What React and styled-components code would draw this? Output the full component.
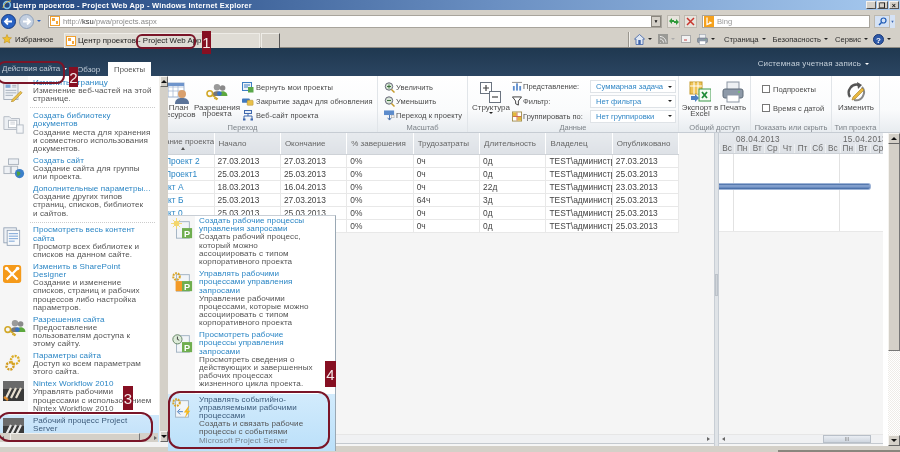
import React from "react";
import styled, { createGlobalStyle } from "styled-components";

const Global = createGlobalStyle`
  html, body { margin: 0; padding: 0; background: #f5f5f5; }
  * { box-sizing: border-box; }
  #root { width: 900px; height: 452px; overflow: hidden; }
`;

const Page = styled.div`
  position: relative; width: 900px; height: 452px; overflow: hidden;
  display: flex; flex-direction: column;
  font-family: "Liberation Sans", Tahoma, sans-serif; font-size: 8.1px; color: #444;
  filter: blur(0.3px);
`;

/* ---------- browser chrome ---------- */
const TitleBar = styled.div`
  height: 10px; flex: none; display: flex; align-items: center; padding: 0 1px 0 2px;
  background: linear-gradient(90deg, #23467f 0%, #3d6299 25%, #6a8fc2 55%, #a6c9ef 100%);
`;
const TitleText = styled.span`
  color: #fff; font-weight: bold; font-size: 7.5px; margin-left: 1px; letter-spacing: .2px; flex: 1; white-space: nowrap;
`;
const WinBtn = styled.span`
  width: 10.5px; height: 8px; margin-left: 1px; background: #d4d0c8; border: 1px solid #f4f2ee;
  border-right-color: #555; border-bottom-color: #555; display: flex; align-items: center; justify-content: center;
  color: #111; font-size: 7px; line-height: 1; font-weight: bold;
`;
const AddressBar = styled.div`
  height: 21px; flex: none; background: #d4d0c8; display: flex; align-items: center; padding: 1px 5px 0 1px;
`;
const NavBtn = styled.div`display: flex; width: 15px; height: 15px; margin-right: 3px;`;
const AddrField = styled.div`
  width: 614px; height: 13px; margin-left: 7px; background: #fff; border: 1px solid #a8a49c;
  display: flex; align-items: center; padding-left: 1px; font-size: 7.6px; color: #8a8a8a;
`;
const AddrText = styled.span`flex: 1; margin-left: 3px; b { color: #333; font-weight: normal; }`;
const DropBtn = styled.span`
  width: 10px; height: 11px; background: #d4d0c8; border: 1px solid #8a867e; display: flex;
  align-items: center; justify-content: center; font-size: 5px; color: #111;
`;
const SmallBtn = styled.div`
  width: 13px; height: 13px; margin-left: ${p => p.$ml || 4}px; background: #e7e4dd; border: 1px solid #bdb9b0;
  display: flex; align-items: center; justify-content: center;
`;
const SearchField = styled.div`
  width: 168px; height: 13px; margin-left: 5px; background: #fff; border: 1px solid #a8a49c;
  display: flex; align-items: center; color: #999; font-size: 7.6px; gap: 3px; padding-left: 1px;
`;
const SearchBtn = styled.div`
  width: 16px; height: 13px; margin-left: 4px; background: #d5e2f5; border: 1px solid #bdb9b0;
  display: flex; align-items: center; justify-content: center;
`;
const SearchDrop = styled.div`
  width: 5px; height: 13px; background: #d5e2f5; display: flex; align-items: center; justify-content: center;
  font-size: 4px; color: #3a66b0;
`;
const FavBar = styled.div`
  height: 17px; flex: none; background: #d4d0c8; display: flex; align-items: center; padding: 0 9px 0 2px;
  border-bottom: 1px solid #8e8a82; color: #222; font-size: 7.6px;
`;
const FavLabel = styled.span`margin-left: 3px; width: 49px; white-space: nowrap;`;
const BrowserTab = styled.div`
  width: 196px; height: 15px; margin-top: 2px; background: #dfdcd5; border: 1px solid #eeece7; border-bottom: 0;
  display: flex; align-items: center; gap: 2px; padding-left: 1px; white-space: nowrap; font-size: 7.9px;
`;
const NewTab = styled.div`
  width: 19px; height: 15px; margin-top: 2px; margin-left: 1px; background: #d4d0c8;
  border: 1px solid #eeece7; border-right-color: #555; border-bottom: 0;
`;
const Spacer = styled.div`flex: 1;`;
const ToolSep = styled.div`width: 2px; height: 15px; background: #9a968e; border-right: 1px solid #f1efeb; margin-right: 4px;`;
const ToolItem = styled.span`
  display: inline-flex; align-items: center; gap: 3px; margin-left: ${p => p.$ml || 0}px;
  white-space: nowrap; font-size: 7.6px; color: #2a2a2a;
`;
const Caret = styled.span`
  display: inline-block; width: 0; height: 0; border-left: 2px solid transparent; border-right: 2px solid transparent;
  border-top: 2.5px solid ${p => p.$c || "#222"};
`;

/* ---------- sharepoint bar ---------- */
const SpBar = styled.div`
  height: 28px; flex: none; background: linear-gradient(#1f3850, #2b4561); display: flex; align-items: flex-end;
  position: relative; color: #c9d3dd;
`;
const SiteActions = styled.div`
  height: 13px; width: 77px; padding-left: 2px; display: inline-flex; align-items: center; gap: 3px; margin-bottom: 1px;
  font-size: 8px; color: #bfcad6; white-space: nowrap;
`;
const SpTab = styled.div`
  height: 14px; padding: 0 ${p => p.$active ? 6 : 0}px; margin-left: ${p => p.$ml || 0}px;
  display: flex; align-items: center; background: ${p => p.$active ? "#fff" : "transparent"};
  color: ${p => p.$active ? "#555" : "#bfcad6"}; font-size: ${p => p.$active ? 7.7 : 8}px;
`;
const UserBox = styled.div`
  margin-left: auto; margin-right: 31px; align-self: flex-start; margin-top: 11px;
  display: flex; align-items: center; gap: 4px; font-size: 8px; color: #c5d0da; letter-spacing: .15px;
`;

/* ---------- ribbon ---------- */
const Ribbon = styled.div`
  height: 57px; flex: none; display: flex; background: linear-gradient(#fff 0%, #fafbfc 60%, #e8ecf0 100%);
  border-bottom: 1px solid #c6ccd3; color: #4a4a4a; font-size: 7.5px;
`;
const Group = styled.div`
  width: ${p => p.$w}px; flex: none; display: flex; flex-direction: column; border-right: 1px solid #e1e5e9;
  padding-left: ${p => p.$pl || 0}px;
`;
const GroupBody = styled.div`flex: 1; display: flex; min-height: 0; padding-top: 5px;`;
const GroupLabel = styled.div`
  height: 9px; flex: none; margin-left: ${p => p.$ml || 0}px; text-align: center; font-size: 7.5px; color: #7c8288; line-height: 9px; white-space: nowrap;
`;
const BigBtn = styled.div`
  width: ${p => p.$w}px; margin-left: ${p => p.$ml || 0}px; flex: none; display: flex; flex-direction: column; align-items: center;
  text-align: center; line-height: 6.5px; white-space: nowrap; padding-top: ${p => p.$pt || 0}px; font-size: 8px;
`;
const BigLabel = styled.span`margin-top: ${p => p.$mt ?? 1.5}px;`;
const RibbonList = styled.div`
  display: flex; flex-direction: column; gap: 2.4px; margin-left: ${p => p.$ml || 0}px;
`;
const RibbonRow = styled.div`
  height: 12px; display: flex; align-items: center; gap: ${p => p.$gap || 2}px; white-space: nowrap; letter-spacing: .1px;
`;
const DataGrid = styled.div`
  display: grid; grid-template-columns: 78px 86px; row-gap: 1.5px; margin-left: 3px; margin-top: -1px;
`;
const DataLabel = styled.div`
  display: flex; align-items: center; gap: 1px; white-space: nowrap; height: 13px; font-size: 7.5px;
`;
const Select = styled.div`
  height: 13px; width: 86px; border: 1px solid #dfe3e7; background: #fff;
  display: flex; align-items: center; justify-content: space-between; padding: 0 3px 0 5px;
  color: #2f86c6; font-size: 7.6px; white-space: nowrap;
`;
const CheckList = styled.div`display: flex; flex-direction: column; gap: 8px; margin: 2.5px 0 0 11px;`;
const CheckRow = styled.label`display: flex; align-items: center; gap: 3px; height: 11px; white-space: nowrap; letter-spacing: .05px;`;
const Box = styled.span`width: 8px; height: 8px; border: 1px solid #777; background: #fff; display: block;`;

/* ---------- content ---------- */
const Body = styled.div`flex: 1; display: flex; min-height: 0; background: #f5f5f5;`;
const LeftPane = styled.div`
  width: 714px; flex: none; display: flex; flex-direction: column; background: #f5f5f5;
`;
const GridTable = styled.table`
  border-collapse: collapse; table-layout: fixed; width: 677px; font-size: 8.4px;
`;
const Th = styled.th`
  height: 21px; padding: 0 4px; background: linear-gradient(#e7eaee, #dde1e6); border-right: 1px solid #fff;
  border-bottom: 1px solid #ced2d7; font-weight: normal; color: #666; text-align: left; white-space: nowrap; overflow: hidden;
  font-size: 8px; vertical-align: ${p => p.$first ? "top" : "middle"}; position: relative;
  padding-left: ${p => p.$first ? 147 : 4}px; padding-top: ${p => p.$first ? 4 : 0}px;
`;
const Td = styled.td`
  height: 13px; padding: 0 0 0 3px; background: #fff; border-right: 1px solid #e8e8e8; border-bottom: 1px solid #e8e8e8;
  white-space: nowrap; overflow: hidden; color: #444; line-height: 10px;
`;
const NameTd = styled(Td)`padding-left: ${p => p.$pl}px; color: #2b86c5;`;
const SortMark = styled.span`
  position: absolute; left: 181px; top: 14px; width: 0; height: 0; border-left: 2px solid transparent;
  border-right: 2px solid transparent; border-bottom: 3px solid #555;
`;
const PaneFill = styled.div`flex: 1;`;
const PaneScroll = styled.div`
  height: 10px; flex: none; margin-bottom: 2px; border-top: 1px solid #e6e6e6; background: #f0f1f3; border-bottom: 1px solid #c4c9cf;
  display: flex; align-items: center; justify-content: flex-end; padding: 0 4px; gap: 10px;
`;
const Tri = styled.span`
  width: 0; height: 0; border-top: 2px solid transparent; border-bottom: 2px solid transparent;
  ${p => p.$dir === "l" ? "border-right: 3px solid #666;" : "border-left: 3px solid #666;"}
`;
const Splitter = styled.div`
  width: 5px; flex: none; background: #dfe3e7; border-left: 1px solid #c8ced5; border-right: 1px solid #c8ced5;
  display: flex; align-items: center; justify-content: center; padding-bottom: 10px;
`;
const SplitGrip = styled.div`width: 3px; height: 22px; background: #cfd4da; border: 1px solid #bcc2c9;`;
const GanttPane = styled.div`width: 164px; flex: none; display: flex; flex-direction: column; background: #f5f5f5;`;
const GanttHead = styled.div`
  height: 21px; flex: none; background: linear-gradient(#e7eaee, #dde1e6); display: flex; flex-direction: column; overflow: hidden;
  border-bottom: 1px solid #ced2d7; font-size: 8.2px; color: #666; padding-top: 2px;
`;
const WeekRow = styled.div`height: 9px; display: flex; letter-spacing: .3px; line-height: 10px;`;
const WeekCell = styled.div`width: ${p => p.$w}px; flex: none; white-space: nowrap; padding-left: ${p => p.$pl}px; overflow: hidden;`;
const DayRow = styled.div`height: 10px; display: flex; line-height: 10px;`;
const DayCell = styled.div`width: 15.1px; flex: none; text-align: center; border-left: 1px solid #eef0f2;`;
const GanttBody = styled.div`height: 78px; flex: none; background: #fff; position: relative; border-bottom: 1px solid #e8e8e8;`;
const GridLine = styled.div`position: absolute; top: 0; bottom: 0; left: ${p => p.$x}px; width: 1px; background: #e2e2e2;`;
const GanttBar = styled.div`
  position: absolute; left: 0; top: 29px; width: 152px; height: 7px; border-radius: 0 3px 3px 0;
  background: linear-gradient(#3f659f, #8faad4 35%, #6f90c4 65%, #3f659f); border: 1px solid #9db3d6; border-left: 0;
`;
const GanttScroll = styled(PaneScroll)`justify-content: flex-start; padding: 0 0 0 3px; gap: 0;`;
const GanttThumb = styled.div`
  width: 48px; height: 8px; margin-left: 98px; background: linear-gradient(#e9edf3, #cfd6df); border: 1px solid #b8bfc8;
  text-align: center; font-size: 5px; line-height: 6px; color: #777;
`;
const RightGap = styled.div`width: 5px; flex: none; background: #fff;`;
const PageScroll = styled.div`
  width: 12px; flex: none; display: flex; flex-direction: column;
  background: repeating-conic-gradient(#eeece8 0 25%, #fff 0 50%) 0 0 / 2px 2px;
`;
const ScrollBtn = styled.div`
  height: ${p => p.$h || 11}px; flex: none; background: #d4d0c8; border: 1px solid #f5f3ef; border-right-color: #666; border-bottom-color: #666;
  display: flex; align-items: center; justify-content: center;
`;
const ScrollThumb = styled.div`height: ${p => p.$h}px; flex: none; background: #d4d0c8; border-right: 1px solid #777; border-bottom: 1px solid #777; border-left: 1px solid #f5f3ef;`;
const ScrollFill = styled.div`flex: 1;`;
const Up = styled.span`width: 0; height: 0; border-left: 3px solid transparent; border-right: 3px solid transparent; border-bottom: 3px solid #111;`;
const Down = styled.span`width: 0; height: 0; border-left: 3px solid transparent; border-right: 3px solid transparent; border-top: 3px solid #111;`;
const BottomBar = styled.div`
  height: 6px; flex: none; background: #d4d0c8; display: flex; justify-content: flex-end; align-items: flex-end;
`;
const BottomLine = styled.div`width: 122px; height: 2px; background: #8a867e;`;

/* ---------- menus ---------- */
const SiteMenu = styled.div`
  position: absolute; left: 0; top: 76px; width: 168px; height: 366px; background: #fff; overflow: hidden; display: flex;
`;
const MenuCol = styled.div`
  width: 159px; flex: none; background: linear-gradient(90deg, #f6f6f6 0 28px, #fff 28px); padding-top: 3px; position: relative;
`;
const MenuItem = styled.div`
  display: flex; padding: ${p => p.$pt ?? 1.8}px 0 ${p => p.$pb ?? 1.8}px 0; position: relative;
  ${p => p.$hi && "background: linear-gradient(#cfe8fb, #bfe0f9);"}
`;
const MenuIcon = styled.div`width: ${p => p.$w || 33}px; flex: none; padding-left: 3px; display: flex; align-items: flex-start; padding-top: ${p => p.$pt ?? 1}px;`;
const MenuText = styled.div`flex: 1; line-height: 8.2px; font-size: 8.1px; letter-spacing: .1px; white-space: nowrap;`;
const MenuTitle = styled.div`color: ${p => p.$dark ? "#3b5a7a" : "#2b86c5"};`;
const MenuDesc = styled.div`color: ${p => p.$c || "#555"};`;
const MenuSep = styled.div`height: 0; margin: 2px 4px 2px 30px; border-top: 1px dotted #ccc;`;
const MenuV = styled.div`width: 9px; flex: none; background: #d4d0c8; border-left: 1px solid #f1efeb; display: flex; flex-direction: column;`;
const MenuH = styled.div`
  position: absolute; left: 0; bottom: 0; width: 158px; height: 9px; background: #d4d0c8; display: flex; align-items: center; justify-content: space-between; padding: 0 1px;
`;
const MenuHThumb = styled.div`position: absolute; left: 10px; top: 0; width: 130px; height: 8px; background: #d4d0c8; border: 1px solid #f1efeb; border-right-color: #777; border-bottom-color: #777;`;
const BelowMenu = styled.div`
  position: absolute; left: 0; top: 442px; width: 168px; height: 5px; background: #f2f2f2;
`;
const Flyout = styled.div`
  position: absolute; left: 168px; top: 215px; width: 168px; height: 236px; overflow: hidden; padding-top: 1px;
  border-right: 1px solid #9aa8b4; border-top: 1px solid #c8ced5;
  background: linear-gradient(90deg, #f6f6f6 0 27px, #fff 27px);
`;
const FlyItem = styled.div`
  display: flex; padding: ${p => p.$pt ?? 0}px 0 0 0;
  ${p => p.$hi && "background: linear-gradient(#d2ebfc, #bbe0fa); margin-top: 5px; height: 57px;"}
`;
const FlyGap = styled.div`height: ${p => p.$h}px;`;

/* ---------- annotations ---------- */
const Tag = styled.div`
  position: absolute; left: ${p => p.$x}px; top: ${p => p.$y}px; width: ${p => p.$w}px; height: ${p => p.$h}px;
  background: #860f22; color: #f4e9e9; font-family: "Liberation Sans", sans-serif; font-size: 15px; display: flex; align-items: center; justify-content: center;
`;
const Ring = styled.div`
  position: absolute; left: ${p => p.$x}px; top: ${p => p.$y}px; width: ${p => p.$w}px; height: ${p => p.$h}px;
  border: 2px solid #7a1528; border-radius: ${p => p.$r}px;
`;

/* ---------- drawings ---------- */
const IEIcon = () => (<svg width="10" height="10" viewBox="0 0 10 10"><circle cx="5" cy="5" r="3.4" fill="none" stroke="#7ec4f0" strokeWidth="1.5"/><path d="M1 8 C2 3 6 1 9 1" fill="none" stroke="#e8c14a" strokeWidth="1"/></svg>);
const NavIcon = ({ off }) => (<svg width="15" height="15" viewBox="0 0 15 15"><circle cx="7.5" cy="7.5" r="7" fill={off ? "#c3cfe0" : "#2a63c4"} stroke={off ? "#8fa0b8" : "#16397f"}/><path d={off ? "M4 7.5h7M8 4.5l3 3-3 3" : "M11 7.5H4M7 4.5l-3 3 3 3"} fill="none" stroke="#fff" strokeWidth="1.8"/></svg>);
const Fav = () => (<svg width="10" height="10" viewBox="0 0 10 10"><rect x=".5" y=".5" width="9" height="9" fill="#fff" stroke="#f0a030"/><path d="M2 2h3v3H2zM6 5h2v3H6z" fill="#f4a63a"/></svg>);
const Star = () => (<svg width="10" height="10" viewBox="0 0 10 10"><path d="M5 .5l1.3 3 3.2.3-2.4 2.1.7 3.1L5 7.4 2.2 9l.7-3.1L.5 3.8l3.2-.3z" fill="#f0c030" stroke="#b98a18" strokeWidth=".5"/></svg>);
const RefreshI = () => (<svg width="10" height="9" viewBox="0 0 10 9"><path d="M0 4l3-3v2h2v2H3v2zM10 5L7 8V6H5V4h2V2z" fill="#2f9a3a"/></svg>);
const CloseI = () => (<svg width="9" height="9" viewBox="0 0 9 9"><path d="M1 1l7 7M8 1L1 8" stroke="#c8362e" strokeWidth="1.5"/></svg>);
const BingI = () => (<svg width="10" height="11" viewBox="0 0 10 11"><rect width="10" height="11" fill="#f5a11c"/><path d="M3 1.5v7l4-1.7-1.8-1" fill="none" stroke="#fff" strokeWidth="1.3"/></svg>);
const LensI = () => (<svg width="9" height="9" viewBox="0 0 9 9"><circle cx="5.5" cy="3.5" r="2.5" fill="none" stroke="#1f5bb5" strokeWidth="1.2"/><path d="M3.5 5.5L1 8" stroke="#1f5bb5" strokeWidth="1.5"/></svg>);
const HomeI = () => (<svg width="11" height="11" viewBox="0 0 11 11"><path d="M5.5 .5L.5 5h1.5v5.5h7V5h1.5z" fill="#dfe7f2" stroke="#3d62a8" strokeWidth=".8"/><rect x="4.3" y="6" width="2.4" height="4.5" fill="#3d62a8"/></svg>);
const RssI = () => (<svg width="10" height="10" viewBox="0 0 10 10"><rect width="10" height="10" fill="#9a9a96"/><path d="M2 8.5h.5M2 5c2 0 3.5 1.5 3.5 3.5M2 2.5c3.3 0 6 2.7 6 6" stroke="#eee" fill="none"/></svg>);
const MailI = () => (<svg width="10" height="8" viewBox="0 0 10 8"><rect x=".5" y=".5" width="9" height="7" fill="#f2f2f2" stroke="#aaa"/><path d="M3 5h3" stroke="#c44"/></svg>);
const PrintI = ({ s = 11 }) => (<svg width={s} height={s} viewBox="0 0 22 22"><rect x="5" y="1" width="12" height="8" fill="#eef0f3" stroke="#8b95a3"/><rect x="1" y="8" width="20" height="9" rx="2" fill="#8d99a8" stroke="#5f6a78"/><rect x="5" y="14" width="12" height="7" fill="#fff" stroke="#8b95a3"/><circle cx="17" cy="11" r="1" fill="#6fc26f"/></svg>);
const HelpI = () => (<svg width="11" height="11" viewBox="0 0 11 11"><circle cx="5.5" cy="5.5" r="5" fill="#2e59a8" stroke="#1b3a78"/><text x="5.5" y="8.5" fontSize="8" fontFamily="Liberation Sans" fontWeight="bold" textAnchor="middle" fill="#fff">?</text></svg>);

const PlanI = () => (<svg width="24" height="24" viewBox="0 0 24 24"><rect x="1" y="2" width="16" height="14" fill="#fff" stroke="#9db2cf"/><path d="M1 6h16M1 10h16M6 2v14M11 2v14" stroke="#9db2cf" strokeWidth=".7"/><rect x="1" y="2" width="16" height="3" fill="#6f95cc"/><circle cx="15" cy="13" r="4" fill="#d9a06d"/><path d="M8 23c0-5 3-6 7-6s7 1 7 6z" fill="#5a7399"/></svg>);
const PermI = () => (<svg width="24" height="22" viewBox="0 0 30 24"><circle cx="15" cy="6" r="4" fill="#9a9a9a"/><path d="M9 17c0-5 3-6 6-6s6 1 6 6z" fill="#777"/><circle cx="22" cy="7" r="3.5" fill="#8a8a8a"/><path d="M17 17c0-4 2-6 5-6s6 2 6 6z" fill="#5da83e"/><circle cx="18" cy="14" r="3" fill="#3a72c4"/><circle cx="6" cy="14" r="3.5" fill="none" stroke="#d2a92a" strokeWidth="2"/><path d="M9 16l7 5M13 19l-1 2M15 20l-1 2" stroke="#d2a92a" strokeWidth="2"/></svg>);
const TinyDoc = ({ c = "#3d7fc4", c2 = "#5aa84a" }) => (<svg width="12" height="11" viewBox="0 0 12 11"><rect x=".5" y=".5" width="9" height="8" fill="#eef3f9" stroke={c}/><path d="M2 3h6M2 5h4" stroke={c}/><rect x="6" y="5" width="5.5" height="5.5" fill={c2}/></svg>);
const TinyClose = () => (<svg width="12" height="9" viewBox="0 0 14 9"><rect x="0" y="1" width="9" height="5" rx="1" fill="#3f78bf"/><rect x="6" y="3" width="7" height="6" rx="1" fill="#e9c04a" stroke="#a98522" strokeWidth=".5"/></svg>);
const TinySite = () => (<svg width="12" height="11" viewBox="0 0 11 11"><rect x="2" y=".5" width="7" height="3" fill="#e5edf7" stroke="#3f68ad"/><path d="M5.5 3.5V6M1.5 9V6h8v3" fill="none" stroke="#3f68ad"/><rect x=".5" y="8.5" width="2.5" height="2" fill="#3f68ad"/><rect x="8" y="8.5" width="2.5" height="2" fill="#3f68ad"/></svg>);
const ZoomI = ({ minus }) => (<svg width="11" height="11" viewBox="0 0 11 11"><circle cx="5" cy="4.5" r="3.7" fill="#d9e7d8" stroke="#667"/><path d={minus ? "M3 4.5h4" : "M3 4.5h4M5 2.5v4"} stroke="#3b6f3a"/><path d="M7.5 7.5l3 3" stroke="#c69b2c" strokeWidth="1.5"/></svg>);
const GotoI = () => (<svg width="11" height="11" viewBox="0 0 12 11"><rect x="0" y="0" width="11" height="5" fill="#5c8ccc"/><path d="M6 5v5M4 8l2 2.5L8 8" stroke="#3f6aa8" fill="none"/><rect x="8" y="5" width="3" height="3" fill="#f4f4f4" stroke="#999" strokeWidth=".5"/></svg>);
const OutlineI = () => (<svg width="22" height="21" viewBox="0 0 22 21"><rect x=".5" y=".5" width="11" height="11" fill="#fff" stroke="#6b7480"/><path d="M3 6h6M6 3v6" stroke="#444" strokeWidth="1.2"/><rect x="9.5" y="9.5" width="11" height="11" fill="#fff" stroke="#6b7480"/><path d="M12 15h6" stroke="#444" strokeWidth="1.2"/></svg>);
const ViewI = () => (<svg width="10" height="11" viewBox="0 0 11 11"><rect x="1" y="5" width="2" height="5" fill="#5c8ccc"/><rect x="4.5" y="2" width="2" height="8" fill="#5c8ccc"/><rect x="8" y="5" width="2" height="5" fill="#5c8ccc"/><path d="M0 1h11" stroke="#888"/></svg>);
const FilterI = () => (<svg width="10" height="10" viewBox="0 0 11 10"><path d="M.5 .5h10L7 5v4.5L4 8V5z" fill="#fff" stroke="#333"/></svg>);
const GroupI = () => (<svg width="10" height="11" viewBox="0 0 11 11"><rect x=".5" y=".5" width="10" height="10" fill="#fff" stroke="#a08b4a"/><rect x="1" y="1" width="4" height="4" fill="#e3b93a"/><rect x="6" y="6" width="4" height="4" fill="#e3b93a"/><path d="M5.5 1v9M1 5.5h9" stroke="#c64"/></svg>);
const ExcelI = () => (<svg width="22" height="22" viewBox="0 0 22 22"><rect x="1" y="1" width="12" height="12" fill="#f0c457" stroke="#c49a2d"/><path d="M5 1v12M9 1v12M1 5h12" stroke="#fff"/><rect x="10" y="8" width="12" height="12" fill="#f5faf4" stroke="#3c9a4a"/><path d="M13 11l5 6M18 11l-5 6" stroke="#1f8a37" strokeWidth="1.8"/><path d="M2 15h4v-2l4 4-4 4v-2H2z" fill="#4d80c4"/></svg>);
const EditI = () => (<svg width="22" height="22" viewBox="0 0 22 22"><path d="M5 16A8 8 0 0 1 14 4" fill="none" stroke="#555" strokeWidth="2.4"/><path d="M17 6A8 8 0 0 1 9 19" fill="none" stroke="#888" strokeWidth="2"/><path d="M12 1l5 3-4 4z" fill="#555"/><path d="M8 16l9-9 2 2-9 9-3 1z" fill="#e8b840" stroke="#a57c1e" strokeWidth=".6"/></svg>);

const PageEdit = () => (<svg width="20" height="20" viewBox="0 0 24 24"><rect x="1" y="1" width="17" height="20" fill="#eef1f5" stroke="#9aa5b2"/><rect x="3" y="3" width="6" height="4" fill="#7ea6d6"/><path d="M3 10h13M3 13h13M3 16h9M11 4h5M11 6h5" stroke="#9aa5b2"/><path d="M11 21l10-10 2 2-10 10-3 1z" fill="#e9c04a" stroke="#a57c1e" strokeWidth=".6"/></svg>);
const LibI = () => (<svg width="22" height="22" viewBox="0 0 24 24"><path d="M1 4h6l2 2h9v12H1z" fill="#eceff3" stroke="#b3bac3"/><rect x="6" y="8" width="9" height="8" fill="#fff" stroke="#b3bac3"/><path d="M8 10h5M8 12h5" stroke="#c7ccd2"/><rect x="15" y="13" width="7" height="9" fill="#f4f6f8" stroke="#b3bac3"/></svg>);
const SiteI = () => (<svg width="22" height="22" viewBox="0 0 24 24"><rect x="6" y="1" width="11" height="6" fill="#eef1f5" stroke="#aab2bc"/><rect x="1" y="9" width="7" height="8" fill="#eef1f5" stroke="#aab2bc"/><rect x="9" y="9" width="7" height="8" fill="#eef1f5" stroke="#aab2bc"/><circle cx="18" cy="17" r="5" fill="#3b7fc9"/><path d="M15 15c2-1 4 0 4 2s-3 2-3 4" fill="#4ea33f"/></svg>);
const ContentI = () => (<svg width="20" height="20" viewBox="0 0 24 24"><rect x="1" y="1" width="15" height="18" fill="#eef1f5" stroke="#8f9fb3"/><rect x="5" y="4" width="15" height="18" fill="#f7f9fb" stroke="#8f9fb3"/><path d="M7 8h11M7 11h11M7 14h11M7 17h7" stroke="#5f93cf"/></svg>);
const SpdI = () => (<svg width="20" height="20" viewBox="0 0 22 22"><rect width="20" height="20" y="1" rx="3" fill="#f59a1a"/><path d="M4 5l12 12M16 5L4 17" stroke="#fff" strokeWidth="2.4"/><circle cx="4" cy="5" r="2" fill="#fff"/><circle cx="16" cy="5" r="2" fill="#fff"/></svg>);
const GearsI = () => (<svg width="20" height="20" viewBox="0 0 20 20"><circle cx="12" cy="7" r="4" fill="none" stroke="#dcae28" strokeWidth="2.4" strokeDasharray="2 1"/><circle cx="7" cy="13" r="3.5" fill="none" stroke="#d29c1f" strokeWidth="2.4" strokeDasharray="2 1"/></svg>);
const NintexI = ({ green }) => (<svg width="21" height="20" viewBox="0 0 21 20"><rect width="21" height="20" fill="#3a3a3a"/><rect width="21" height="8" fill="#6a6a6a"/><path d="M3 17L8 7M8 17l5-10M13 17l5-10" stroke={green ? "#e8e8e8" : "#e8e0d0"} strokeWidth="2.2"/><path d="M1 16l4 3" stroke={green ? "#3a9a3a" : "#e08a2a"} strokeWidth="2.2"/></svg>);
const WfBase = ({ children }) => (<svg width="22" height="22" viewBox="0 0 24 24"><rect x="6" y="4" width="14" height="18" fill="#f2f5f8" stroke="#9fb0c0"/><rect x="12" y="11" width="11" height="11" fill="#6fae4f"/><text x="17.5" y="20.5" fontSize="10" fontWeight="bold" fontFamily="Liberation Sans" textAnchor="middle" fill="#fff">P</text>{children}</svg>);
const SunI = () => (<WfBase><circle cx="6" cy="6" r="3" fill="#f3d56a"/><path d="M6 0v12M0 6h12M2 2l8 8M10 2l-8 8" stroke="#f3d56a"/></WfBase>);
const WfGearI = () => (<WfBase><circle cx="6" cy="6" r="3.6" fill="none" stroke="#d9a426" strokeWidth="2.2" strokeDasharray="2 1"/><rect x="5" y="11" width="7" height="11" fill="#f39a26"/></WfBase>);
const WfClockI = () => (<WfBase><circle cx="7" cy="8" r="5" fill="#dcebd8" stroke="#5f7f5f"/><path d="M7 5v3l2 1" stroke="#333" fill="none"/></WfBase>);
const WfBoltI = () => (<svg width="22" height="22" viewBox="0 0 24 24"><rect x="5" y="4" width="14" height="18" fill="#f2f5f8" stroke="#9fb0c0"/><circle cx="6" cy="6" r="3.6" fill="none" stroke="#d9a426" strokeWidth="2.2" strokeDasharray="2 1"/><path d="M8 16h5M10 13l-3 3 3 3" stroke="#3f78bf" fill="none"/><path d="M19 10l-5 7h3l-2 6 6-8h-3l2-5z" fill="#f4b81c"/></svg>);

/* ---------- data ---------- */
const rows = [
  ["Проект 2", 165, "27.03.2013", "27.03.2013", "0%", "0ч", "0д", "TEST\\администратор", "27.03.2013"],
  ["Проект1", 165, "25.03.2013", "25.03.2013", "0%", "0ч", "0д", "TEST\\администратор", "25.03.2013"],
  ["Проект А", 148, "18.03.2013", "16.04.2013", "0%", "0ч", "22д", "TEST\\администратор", "23.03.2013"],
  ["Проект Б", 148, "25.03.2013", "27.03.2013", "0%", "64ч", "3д", "TEST\\администратор", "25.03.2013"],
  ["Проект 0", 148, "25.03.2013", "25.03.2013", "0%", "0ч", "0д", "TEST\\администратор", "25.03.2013"],
  ["Проект В", 148, "25.03.2013", "25.03.2013", "0%", "0ч", "0д", "TEST\\администратор", "25.03.2013"],
];
const heads = ["Начало", "Окончание", "% завершения", "Трудозатраты", "Длительность", "Владелец", "Опубликовано"];
const days = ["Вс", "Пн", "Вт", "Ср", "Чт", "Пт", "Сб", "Вс", "Пн", "Вт", "Ср"];

export default function App() {
  return (
    <Page>
      <Global />
      <TitleBar>
        <IEIcon />
        <TitleText>Центр проектов - Project Web App - Windows Internet Explorer</TitleText>
        <WinBtn>_</WinBtn><WinBtn>❐</WinBtn><WinBtn>×</WinBtn>
      </TitleBar>
      <AddressBar>
        <NavBtn><NavIcon /></NavBtn>
        <NavBtn><NavIcon off /></NavBtn>
        <Caret $c="#2a63c4" />
        <AddrField>
          <Fav />
          <AddrText>http://<b>ksu</b>/pwa/projects.aspx</AddrText>
          <DropBtn>▼</DropBtn>
        </AddrField>
        <SmallBtn $ml={5}><RefreshI /></SmallBtn>
        <SmallBtn><CloseI /></SmallBtn>
        <SearchField><BingI />Bing</SearchField>
        <SearchBtn><LensI /></SearchBtn>
        <SearchDrop>▼</SearchDrop>
      </AddressBar>
      <FavBar>
        <Star />
        <FavLabel>Избранное</FavLabel>
        <BrowserTab><Fav />Центр проектов - Project Web App</BrowserTab>
        <NewTab />
        <Spacer />
        <ToolSep />
        <ToolItem><HomeI /><Caret /></ToolItem>
        <ToolItem $ml={6}><RssI /><Caret $c="#aaa" /></ToolItem>
        <ToolItem $ml={6}><MailI /></ToolItem>
        <ToolItem $ml={6}><PrintI /><Caret /></ToolItem>
        <ToolItem $ml={9}>Страница <Caret /></ToolItem>
        <ToolItem $ml={7}>Безопасность <Caret /></ToolItem>
        <ToolItem $ml={7}>Сервис <Caret /></ToolItem>
        <ToolItem $ml={5}><HelpI /><Caret /></ToolItem>
      </FavBar>
      <SpBar>
        <SiteActions>Действия сайта <Caret $c="#fff" /></SiteActions>
        <SpTab>Обзор</SpTab>
        <SpTab $active $ml={8}>Проекты</SpTab>
        <UserBox>Системная учетная запись <Caret $c="#fff" /></UserBox>
      </SpBar>
      <Ribbon>
        <Group $w={378} $pl={168}>
          <GroupBody>
            <BigBtn $w={21}>
              <PlanI />
              <BigLabel $mt={0}>План<br />ресурсов</BigLabel>
            </BigBtn>
            <BigBtn $w={42} $ml={7}>
              <PermI />
              <BigLabel>Разрешения<br />проекта</BigLabel>
            </BigBtn>
            <RibbonList $ml={4}>
              <RibbonRow><TinyDoc />Вернуть мои проекты</RibbonRow>
              <RibbonRow><TinyClose />Закрытие задач для обновления</RibbonRow>
              <RibbonRow><TinySite />Веб-сайт проекта</RibbonRow>
            </RibbonList>
          </GroupBody>
          <GroupLabel $ml={-60}>Переход</GroupLabel>
        </Group>
        <Group $w={90}>
          <GroupBody>
            <RibbonList $ml={6}>
              <RibbonRow $gap={1}><ZoomI />Увеличить</RibbonRow>
              <RibbonRow $gap={1}><ZoomI minus />Уменьшить</RibbonRow>
              <RibbonRow $gap={1}><GotoI />Переход к проекту</RibbonRow>
            </RibbonList>
          </GroupBody>
          <GroupLabel>Масштаб</GroupLabel>
        </Group>
        <Group $w={211}>
          <GroupBody>
            <BigBtn $w={36} $ml={5} $pt={1}>
              <OutlineI />
              <BigLabel $mt={2}>Структура</BigLabel>
              <Caret />
            </BigBtn>
            <DataGrid>
              <DataLabel><ViewI />Представление:</DataLabel>
              <Select>Суммарная задача<Caret /></Select>
              <DataLabel><FilterI />Фильтр:</DataLabel>
              <Select>Нет фильтра<Caret /></Select>
              <DataLabel><GroupI />Группировать по:</DataLabel>
              <Select>Нет группировки<Caret /></Select>
            </DataGrid>
          </GroupBody>
          <GroupLabel>Данные</GroupLabel>
        </Group>
        <Group $w={72}>
          <GroupBody>
            <BigBtn $w={38} $ml={2}>
              <ExcelI />
              <BigLabel>Экспорт в<br />Excel</BigLabel>
            </BigBtn>
            <BigBtn $w={28}>
              <PrintI s={22} />
              <BigLabel>Печать</BigLabel>
            </BigBtn>
          </GroupBody>
          <GroupLabel>Общий доступ</GroupLabel>
        </Group>
        <Group $w={81}>
          <GroupBody>
            <CheckList>
              <CheckRow><Box />Подпроекты</CheckRow>
              <CheckRow><Box />Время с датой</CheckRow>
            </CheckList>
          </GroupBody>
          <GroupLabel>Показать или скрыть</GroupLabel>
        </Group>
        <Group $w={48}>
          <GroupBody>
            <BigBtn $w={48}>
              <EditI />
              <BigLabel>Изменить</BigLabel>
            </BigBtn>
          </GroupBody>
          <GroupLabel>Тип проекта</GroupLabel>
        </Group>
      </Ribbon>
      <Body>
        <LeftPane>
          <GridTable>
            <colgroup>
              <col width="214" />
              {heads.map(h => <col key={h} width="66.4" />)}
            </colgroup>
            <thead>
              <tr>
                <Th $first>Название проекта<SortMark /></Th>
                {heads.map(h => <Th key={h}>{h}</Th>)}
              </tr>
            </thead>
            <tbody>
              {rows.map(r => (
                <tr key={r[0]}>
                  <NameTd $pl={r[1]}>{r[0]}</NameTd>
                  {r.slice(2).map((c, i) => <Td key={i}>{c}</Td>)}
                </tr>
              ))}
            </tbody>
          </GridTable>
          <PaneFill />
          <PaneScroll><Tri /></PaneScroll>
        </LeftPane>
        <Splitter><SplitGrip /></Splitter>
        <GanttPane>
          <GanttHead>
            <WeekRow>
              <WeekCell $w={120} $pl={17}>08.04.2013</WeekCell>
              <WeekCell $w={44} $pl={4}>15.04.2013</WeekCell>
            </WeekRow>
            <DayRow>{days.map((d, i) => <DayCell key={i}>{d}</DayCell>)}</DayRow>
          </GanttHead>
          <GanttBody>
            <GridLine $x={14} />
            <GridLine $x={120} />
            <GanttBar />
          </GanttBody>
          <PaneFill />
          <GanttScroll>
            <Tri $dir="l" />
            <GanttThumb>III</GanttThumb>
          </GanttScroll>
        </GanttPane>
        <RightGap />
        <PageScroll>
          <ScrollBtn><Up /></ScrollBtn>
          <ScrollThumb $h={207} />
          <ScrollFill />
          <ScrollBtn><Down /></ScrollBtn>
        </PageScroll>
      </Body>
      <BottomBar><BottomLine /></BottomBar>

      <SiteMenu>
        <MenuCol>
          <MenuItem $pt={0}>
            <MenuIcon $pt={3}><PageEdit /></MenuIcon>
            <MenuText>
              <MenuTitle>Изменить страницу</MenuTitle>
              <MenuDesc>Изменение веб-частей на этой<br />странице.</MenuDesc>
            </MenuText>
          </MenuItem>
          <MenuSep />
          <MenuItem>
            <MenuIcon><LibI /></MenuIcon>
            <MenuText>
              <MenuTitle>Создать библиотеку<br />документов</MenuTitle>
              <MenuDesc>Создание места для хранения<br />и совместного использования<br />документов.</MenuDesc>
            </MenuText>
          </MenuItem>
          <MenuItem>
            <MenuIcon><SiteI /></MenuIcon>
            <MenuText>
              <MenuTitle>Создать сайт</MenuTitle>
              <MenuDesc>Создание сайта для группы<br />или проекта.</MenuDesc>
            </MenuText>
          </MenuItem>
          <MenuItem>
            <MenuIcon />
            <MenuText>
              <MenuTitle>Дополнительные параметры...</MenuTitle>
              <MenuDesc>Создание других типов<br />страниц, списков, библиотек<br />и сайтов.</MenuDesc>
            </MenuText>
          </MenuItem>
          <MenuSep />
          <MenuItem>
            <MenuIcon><ContentI /></MenuIcon>
            <MenuText>
              <MenuTitle>Просмотреть весь контент<br />сайта</MenuTitle>
              <MenuDesc>Просмотр всех библиотек и<br />списков на данном сайте.</MenuDesc>
            </MenuText>
          </MenuItem>
          <MenuItem>
            <MenuIcon><SpdI /></MenuIcon>
            <MenuText>
              <MenuTitle>Изменить в SharePoint<br />Designer</MenuTitle>
              <MenuDesc>Создание и изменение<br />списков, страниц и рабочих<br />процессов либо настройка<br />параметров.</MenuDesc>
            </MenuText>
          </MenuItem>
          <MenuItem>
            <MenuIcon><PermI /></MenuIcon>
            <MenuText>
              <MenuTitle>Разрешения сайта</MenuTitle>
              <MenuDesc>Предоставление<br />пользователям доступа к<br />этому сайту.</MenuDesc>
            </MenuText>
          </MenuItem>
          <MenuItem>
            <MenuIcon><GearsI /></MenuIcon>
            <MenuText>
              <MenuTitle>Параметры сайта</MenuTitle>
              <MenuDesc>Доступ ко всем параметрам<br />этого сайта.</MenuDesc>
            </MenuText>
          </MenuItem>
          <MenuItem>
            <MenuIcon><NintexI /></MenuIcon>
            <MenuText>
              <MenuTitle>Nintex Workflow 2010</MenuTitle>
              <MenuDesc>Управлять рабочими<br />процессами с использованием<br />Nintex Workflow 2010</MenuDesc>
            </MenuText>
          </MenuItem>
          <MenuItem $hi>
            <MenuIcon><NintexI green /></MenuIcon>
            <MenuText>
              <MenuTitle $dark>Рабочий процесс Project<br />Server</MenuTitle>
              <MenuDesc>&nbsp;</MenuDesc>
            </MenuText>
          </MenuItem>
        </MenuCol>
        <MenuV>
          <ScrollBtn><Up /></ScrollBtn>
          <ScrollFill />
          <ScrollBtn><Down /></ScrollBtn>
        </MenuV>
        <MenuH>
          <Tri $dir="l" />
          <MenuHThumb />
          <Tri />
        </MenuH>
      </SiteMenu>
      <BelowMenu />

      <Flyout>
        <FlyItem>
          <MenuIcon $w={31} $pt={1}><SunI /></MenuIcon>
          <MenuText>
            <MenuTitle>Создать рабочие процессы<br />управления запросами</MenuTitle>
            <MenuDesc>Создать рабочий процесс,<br />который можно<br />ассоциировать с типом<br />корпоративного проекта</MenuDesc>
          </MenuText>
        </FlyItem>
        <FlyGap $h={4} />
        <FlyItem>
          <MenuIcon $w={31} $pt={1}><WfGearI /></MenuIcon>
          <MenuText>
            <MenuTitle>Управлять рабочими<br />процессами управления<br />запросами</MenuTitle>
            <MenuDesc>Управление рабочими<br />процессами, которые можно<br />ассоциировать с типом<br />корпоративного проекта</MenuDesc>
          </MenuText>
        </FlyItem>
        <FlyGap $h={3.6} />
        <FlyItem>
          <MenuIcon $w={31} $pt={1}><WfClockI /></MenuIcon>
          <MenuText>
            <MenuTitle>Просмотреть рабочие<br />процессы управления<br />запросами</MenuTitle>
            <MenuDesc>Просмотреть сведения о<br />действующих и завершенных<br />рабочих процессах<br />жизненного цикла проекта.</MenuDesc>
          </MenuText>
        </FlyItem>
        <FlyItem $hi $pt={2}>
          <MenuIcon $w={31} $pt={1}><WfBoltI /></MenuIcon>
          <MenuText>
            <MenuTitle $dark>Управлять событийно-<br />управляемыми рабочими<br />процессами</MenuTitle>
            <MenuDesc>Создать и связать рабочие<br />процессы с событиями</MenuDesc>
            <MenuDesc $c="#7a8590">Microsoft Project Server</MenuDesc>
          </MenuText>
        </FlyItem>
      </Flyout>

      <Ring $x={136} $y={34} $w={60} $h={15} $r={6} />
      <Ring $x={-3} $y={61} $w={68} $h={23} $r={8} />
      <Ring $x={-3} $y={412} $w={156} $h={30} $r={12} />
      <Ring $x={168} $y={391} $w={162} $h={58} $r={12} />
      <Tag $x={202} $y={31} $w={9} $h={23}>1</Tag>
      <Tag $x={69} $y={67} $w={9} $h={20}>2</Tag>
      <Tag $x={123} $y={386} $w={10} $h={24}>3</Tag>
      <Tag $x={325} $y={361} $w={11} $h={26}>4</Tag>
    </Page>
  );
}
